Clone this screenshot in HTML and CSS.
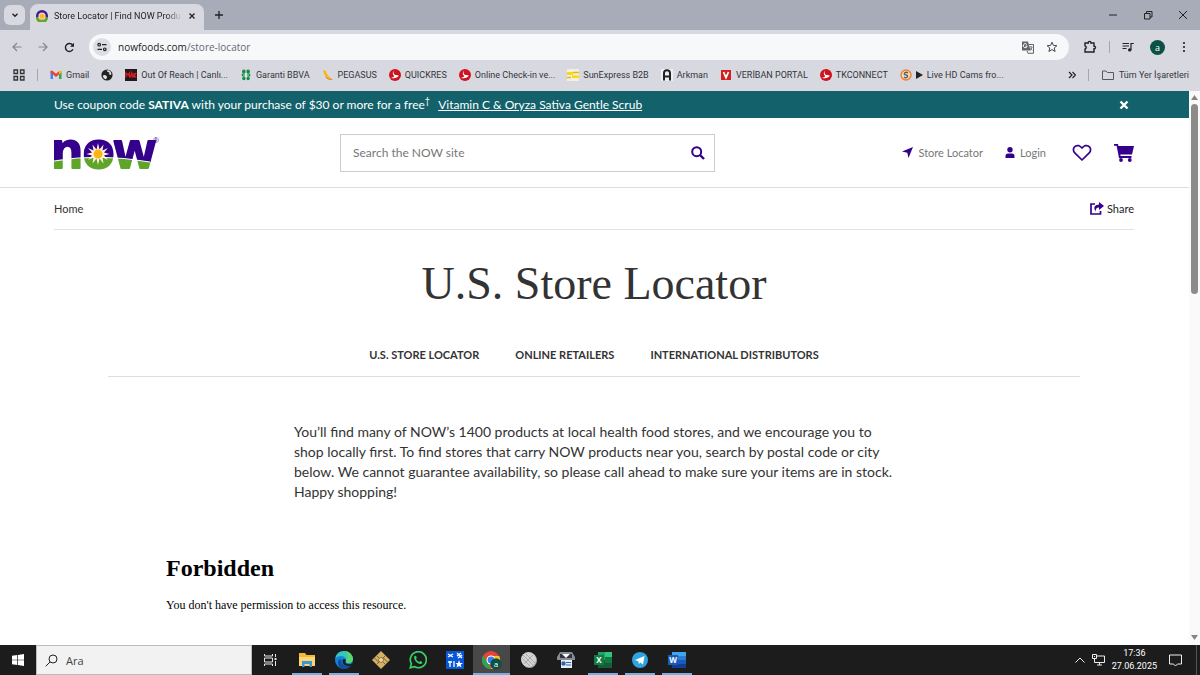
FILE: index.html
```html
<!DOCTYPE html>
<html lang="en">
<head>
    <meta charset="UTF-8">
    <meta name="viewport" content="width=device-width, initial-scale=1.0">
    <title>Store Locator | Find NOW Products</title>
    <link rel="stylesheet" href="styles.css">
</head>
<body>

<!-- shared icons -->
<svg class="defs" aria-hidden="true">
    <symbol id="bird" viewBox="0 0 12 12">
        <circle cx="6" cy="6" r="6" fill="#d0121f"/>
        <path d="M5 1.500C4.200 3 4.400 4.500 5.600 5.800L9.800 6.600C8.600 8.900 5.500 9.800 2 8.900C3.600 8.600 4.700 8 5.200 7C3.300 5.400 3.400 3 5 1.500z" fill="#fff"/>
    </symbol>
</svg>

<div class="tabstrip">
    <button class="tab-search" aria-label="Search tabs">
        <svg width="8" height="8" viewBox="0 0 8 8"><path d="M1.500 2.800L4 5.200L6.500 2.800" fill="none" stroke="#222" stroke-width="1.400"/></svg>
    </button>
    <div class="tab">
        <svg width="12" height="12" viewBox="0 0 12 12">
            <circle cx="6" cy="6" r="6" fill="#3a1a8c"/>
            <path d="M0 7.500Q6 5.500 12 7.500A6 6 0 0 1 0 7.500z" fill="#6aa52c"/>
            <circle cx="6" cy="6.200" r="3.600" fill="#f6d9c8"/>
            <circle cx="6" cy="6.200" r="2.500" fill="#fdb72a"/>
        </svg>
        <span class="tab-title">Store Locator | Find NOW Produ</span>
        <button aria-label="Close tab">
            <svg width="8" height="8" viewBox="0 0 8 8"><path d="M1.500 1.500L6.500 6.500M6.500 1.500L1.500 6.500" stroke="#222" stroke-width="1.300"/></svg>
        </button>
    </div>
    <button class="new-tab" aria-label="New tab">
        <svg width="10" height="10" viewBox="0 0 10 10"><path d="M5 1V9M1 5H9" stroke="#222" stroke-width="1.300"/></svg>
    </button>
    <div class="window-buttons">
        <button aria-label="Minimize"><svg width="10" height="10" viewBox="0 0 10 10"><path d="M1 5H9" stroke="#222"/></svg></button>
        <button aria-label="Restore"><svg width="10" height="10" viewBox="0 0 10 10"><path d="M1.500 3.500H7V9H1.500zM3.500 3.500V1.500H9V7H7" fill="none" stroke="#222"/></svg></button>
        <button aria-label="Close"><svg width="10" height="10" viewBox="0 0 10 10"><path d="M1 1L9 9M9 1L1 9" stroke="#222"/></svg></button>
    </div>
</div>

<div class="toolbar">
    <button aria-label="Back"><svg width="10" height="10" viewBox="0 0 10 10"><path d="M9.500 5H1M5 1L1 5L5 9" fill="none" stroke="#85878d" stroke-width="1.200"/></svg></button>
    <button aria-label="Forward"><svg width="10" height="10" viewBox="0 0 10 10"><path d="M.5 5H9M5 1L9 5L5 9" fill="none" stroke="#85878d" stroke-width="1.200"/></svg></button>
    <button aria-label="Reload"><svg width="11" height="11" viewBox="0 0 11 11"><path d="M9 7.300A4 4 0 1 1 8.600 3L9.300 4" fill="none" stroke="#222" stroke-width="1.400"/><path d="M10 .8V4.700H6.100z" fill="#222"/></svg></button>
    <div class="omnibox">
        <button class="site-info" aria-label="Site information">
            <svg width="10" height="10" viewBox="0 0 10 10"><g fill="none" stroke="#222" stroke-width="1.200"><circle cx="2.200" cy="2.700" r="1.300"/><path d="M5 2.700H9.500M.5 7.300H5"/><circle cx="7.800" cy="7.300" r="1.300"/></g></svg>
        </button>
        <div class="url">nowfoods.com<span>/store-locator</span></div>
        <button aria-label="Translate this page">
            <svg width="13" height="13" viewBox="0 0 13 13"><path d="M1 .5H7L9.500 9.500H1z" fill="#62656b"/><path d="M8 3.500H12.500V12.300H7L6 10" fill="none" stroke="#62656b"/><path d="M8.500 6H11.500M10 5V6M11 6.200Q10.500 8.500 8.800 9.500M9.300 7L11.300 9.300" fill="none" stroke="#62656b" stroke-width=".8"/><path d="M5.800 3.400A2 2 0 1 0 6.200 5.100H4.500" fill="none" stroke="#fff"/></svg>
        </button>
        <button aria-label="Bookmark this tab">
            <svg width="12" height="12" viewBox="0 0 12 12"><path d="M6 1.200L7.400 4.400L10.900 4.700L8.200 7L9.100 10.500L6 8.600L2.900 10.500L3.800 7L1.100 4.700L4.600 4.400z" fill="none" stroke="#44474c"/></svg>
        </button>
    </div>
    <button aria-label="Extensions"><svg width="14" height="14" viewBox="0 0 14 14"><path d="M2 3H5.300V2.200Q6.600 .6 7.900 2.200V3H11V6.300H11.700Q13.300 7.500 11.700 8.800H11V12H2V9.200Q4.500 7.500 2 5.800z" fill="none" stroke="#222" stroke-width="1.400"/></svg></button>
    <i class="divider"></i>
    <button aria-label="Media controls"><svg width="12" height="12" viewBox="0 0 12 12"><path d="M.5 2.500H7M.5 5H7M.5 7.500H4.500M9 9V2.500H11.800" fill="none" stroke="#222" stroke-width="1.200"/><circle cx="7.700" cy="8.900" r="1.700" fill="#222"/></svg></button>
    <button class="avatar" aria-label="Profile">a</button>
    <button aria-label="Menu"><svg width="6" height="12" viewBox="0 0 6 12"><g fill="#222"><circle cx="3" cy="2" r="1.100"/><circle cx="3" cy="6" r="1.100"/><circle cx="3" cy="10" r="1.100"/></g></svg></button>
</div>

<nav class="bookmarks">
    <a href="#" aria-label="Apps"><svg width="12" height="12" viewBox="0 0 12 12"><g fill="none" stroke="#333" stroke-width="1.300"><path d="M1 1H4.500V4.500H1zM7.500 1H11V4.500H7.500zM1 7.500H4.500V11H1zM7.500 7.500H11V11H7.500z"/></g></svg></a>
    <i class="divider"></i>
    <a href="#"><svg width="12" height="12" viewBox="0 0 12 12"><path d="M.5 2.500V10H3V5z" fill="#4285f4"/><path d="M11.500 2.500V10H9V5z" fill="#34a853"/><path d="M.5 2Q1.500 1 3 2.300L6 4.700L9 2.300V5.500L6 7.900L3 5.500L.5 3.500z" fill="#ea4335"/><path d="M9 2.300Q10.500 1 11.500 2V3.500L9 5.500z" fill="#fbbc04"/></svg>Gmail</a>
    <a href="#" aria-label="Bookmark"><svg width="12" height="12" viewBox="0 0 12 12"><circle cx="6" cy="6" r="5.600" fill="#222"/><path d="M1.800 6.500Q4 5.500 5.500 7T4.500 10.300Q2 9.500 1.800 6.500zM5.500 1.500Q6.500 3.500 8.500 3.500Q7.500 5.500 9.500 6L10.500 5Q10 2 7.500 1.300z" fill="#e6e7ea"/></svg></a>
    <a href="#"><svg width="12" height="12" viewBox="0 0 12 12"><path d="M0 0H12V12H0z" fill="#23191a"/><path d="M1 8.500V4L3 6L4.500 4V8.500M5.500 8.500L6.800 4L8 8.500M9 4V8.500M11.300 4L9 6.300L11.300 8.500" fill="none" stroke="#d81e23" stroke-width="1.300"/></svg>Out Of Reach | Canlı...</a>
    <a href="#"><svg width="12" height="12" viewBox="0 0 12 12"><g fill="#168a4a"><circle cx="4" cy="2.500" r="2"/><circle cx="8" cy="2.500" r="2"/><circle cx="3.400" cy="6" r="1.800"/><circle cx="8.600" cy="6" r="1.800"/><circle cx="4" cy="9.500" r="1.800"/><circle cx="8" cy="9.500" r="1.800"/></g><path d="M6 1V11M3 6H9" stroke="#e5efe8" stroke-width=".8"/></svg>Garanti BBVA</a>
    <a href="#"><svg width="12" height="12" viewBox="0 0 12 12"><path d="M1 1.500H3.500Q5 7 11 10.500Q3 11 1 1.500z" fill="#fbb414"/><path d="M3 7Q5 10 11 10.500Q5 11.800 3 7z" fill="#e8621e"/></svg>PEGASUS</a>
    <a href="#"><svg width="12" height="12"><use href="#bird"/></svg>QUICKRES</a>
    <a href="#"><svg width="12" height="12"><use href="#bird"/></svg>Online Check-in ve...</a>
    <a href="#"><svg width="12" height="12" viewBox="0 0 12 12"><path d="M0 0H12V12H0z" fill="#f4f0dc"/><path d="M0 3H6V6H0zM5 6.500H12V9H5z" fill="#fbd80f"/><path d="M6 3.500H12M0 8.500H4" stroke="#d9b92a" stroke-width="1.500"/></svg>SunExpress B2B</a>
    <a href="#"><svg width="12" height="12" viewBox="0 0 12 12"><path d="M0 0H12V12H0z" fill="#eeeff1"/><path d="M3 11.500V4Q3 1.200 6 1.200T9 4V11.500M3 7.500H9" fill="none" stroke="#222" stroke-width="2"/></svg>Arkman</a>
    <a href="#"><svg width="12" height="12" viewBox="0 0 12 12"><path d="M1 1H11V11H1z" fill="#d3201f"/><path d="M3.500 3L6 8.500L8.500 3" fill="none" stroke="#fff" stroke-width="1.800"/></svg>VERİBAN PORTAL</a>
    <a href="#"><svg width="12" height="12"><use href="#bird"/></svg>TKCONNECT</a>
    <a href="#"><svg width="12" height="12" viewBox="0 0 12 12"><circle cx="6" cy="6" r="5" fill="#f8d9b9" stroke="#ee8126" stroke-width="1.400"/><path d="M8 4Q6 2.500 4.700 4T6 6T7.200 8T4 8" fill="none" stroke="#4d6173" stroke-width="1.300"/></svg><svg class="play" width="7" height="8" viewBox="0 0 7 8"><path d="M0 0L7 4L0 8z" fill="#222"/></svg>Live HD Cams fro...</a>
    <button class="more" aria-label="More bookmarks"><svg width="8" height="8" viewBox="0 0 8 8"><path d="M1 1L4 4L1 7M4.500 1L7.500 4L4.500 7" fill="none" stroke="#222" stroke-width="1.200"/></svg></button>
    <i class="divider"></i>
    <a href="#"><svg width="14" height="12" viewBox="0 0 14 12"><path d="M1.500 2H5L6.300 3.500H12.500V10.500H1.500z" fill="none" stroke="#55585e"/></svg>Tüm Yer İşaretleri</a>
</nav>

<div class="viewport">
    <div class="site">
        <div class="promo">
            <p>Use coupon code <b>SATIVA</b> with your purchase of $30 or more for a free<sup>†</sup> <a href="#">Vitamin C &amp; Oryza Sativa Gentle Scrub</a></p>
            <button aria-label="Dismiss"><svg width="10" height="10" viewBox="0 0 10 10"><path d="M1.500 1.500L8.500 8.500M8.500 1.500L1.500 8.500" stroke="#fff" stroke-width="2.400"/></svg></button>
        </div>

        <header class="header">
            <a href="#" class="logo" aria-label="NOW">
                <svg width="112" height="34" viewBox="0 0 112 34">
                    <defs>
                        <pattern id="hill" width="112" height="34" patternUnits="userSpaceOnUse">
                            <path d="M0 0H112V34H0z" fill="#34008c"/>
                            <path d="M0 25Q45 17 96 26L112 29V34H0z" fill="#5fa52a"/>
                            <path d="M0 25Q45 17 96 26" fill="none" stroke="#fff"/>
                        </pattern>
                    </defs>
                    <circle cx="44" cy="18" r="14" fill="url(#hill)"/>
                    <text class="wordmark" x="-3" y="32" fill="url(#hill)" stroke="url(#hill)">now</text>
                    <path d="M44 7L45.500 13.500L49.500 8.500L48.500 14.500L54 12L50 16.500L55.500 18L50 19.500L54 24L48.500 21.500L49.500 27.500L45.500 22.500L44 29L42.500 22.500L38.500 27.500L39.500 21.500L34 24L38 19.500L32.500 18L38 16.500L34 12L39.500 14.500L38.500 8.500L42.500 13.500z" fill="#fff1dc"/>
                    <circle cx="44" cy="18" r="4.500" fill="#fdb515"/>
                    <text class="reg" x="99" y="7">®</text>
                </svg>
            </a>
            <form class="search">
                <input type="search" placeholder="Search the NOW site" aria-label="Search the NOW site">
                <button type="button" aria-label="Search"><svg width="14" height="14" viewBox="0 0 14 14"><circle cx="5.700" cy="5.700" r="4.500" fill="none" stroke="#34008c" stroke-width="2"/><path d="M9 9L13 13" stroke="#34008c" stroke-width="2.400"/></svg></button>
            </form>
            <nav class="account">
                <a href="#"><svg width="11" height="11" viewBox="0 0 11 11"><path d="M11 0L6.500 11L5.300 5.800L0 4.600z" fill="#34008c"/></svg>Store Locator</a>
                <a href="#"><svg width="10" height="11" viewBox="0 0 10 11"><circle cx="5" cy="2.800" r="2.700" fill="#34008c"/><path d="M.5 11V9Q.5 6.500 3 6.500H7Q9.500 6.500 9.500 9V11z" fill="#34008c"/></svg>Login</a>
                <a href="#" class="wishlist" aria-label="Wish list"><svg width="20" height="18" viewBox="0 0 20 18"><path d="M10 16L2.500 8.700Q.5 6 2.200 3.300Q4 1 7 1.700Q8.500 2.200 10 4Q11.500 2.200 13 1.700Q16 1 17.800 3.300Q19.500 6 17.500 8.700z" fill="none" stroke="#34008c" stroke-width="1.700" stroke-linejoin="round"/></svg></a>
                <a href="#" class="cart" aria-label="Cart"><svg width="20" height="18" viewBox="0 0 20 18"><path d="M0 0H4L4.400 2H20L18 10.500H6.300L6.600 12H17.500V14H5L2.600 1.700H0z" fill="#34008c"/><circle cx="7" cy="16" r="1.900" fill="#34008c"/><circle cx="15.800" cy="16" r="1.900" fill="#34008c"/></svg></a>
            </nav>
        </header>

        <main class="content">
            <div class="crumbs">
                <a href="#">Home</a>
                <a href="#" class="share"><svg width="14" height="13" viewBox="0 0 14 13"><path d="M5 2H1V12H10.500V9" fill="none" stroke="#34008c" stroke-width="1.700"/><path d="M9 0L14 4L9 8V5.500Q5.500 5.300 5.800 9.500Q1.500 3.500 9 2.500z" fill="#34008c"/></svg>Share</a>
            </div>
            <h1>U.S. Store Locator</h1>
            <nav class="sections">
                <a href="#">U.S. STORE LOCATOR</a>
                <a href="#">ONLINE RETAILERS</a>
                <a href="#">INTERNATIONAL DISTRIBUTORS</a>
            </nav>
            <p class="intro">You’ll find many of NOW’s 1400 products at local health food stores, and we encourage you to shop locally first. To find stores that carry NOW products near you, search by postal code or city below. We cannot guarantee availability, so please call ahead to make sure your items are in stock. Happy shopping!</p>
            <section class="error">
                <h2>Forbidden</h2>
                <p>You don't have permission to access this resource.</p>
            </section>
        </main>
    </div>
    <div class="scrollbar">
        <svg width="7" height="5" viewBox="0 0 7 5"><path d="M0 5L3.500 0L7 5z" fill="#858585"/></svg>
        <div class="thumb"></div>
        <svg width="7" height="5" viewBox="0 0 7 5"><path d="M0 0L3.500 5L7 0z" fill="#858585"/></svg>
    </div>
</div>

<footer class="taskbar">
    <button class="start" aria-label="Start"><svg width="12" height="12" viewBox="0 0 12 12"><path d="M0 1.700L5.300 1V5.700H0zM6 .9L12 0V5.700H6zM0 6.300H5.300V11L0 10.300zM6 6.300H12V12L6 11.100z" fill="#fff"/></svg></button>
    <label class="find">
        <svg width="13" height="13" viewBox="0 0 13 13"><circle cx="8" cy="5" r="4" fill="none" stroke="#222"/><path d="M5 8L.7 12.300" stroke="#222"/></svg>
        <input type="text" placeholder="Ara" aria-label="Ara">
    </label>
    <button class="task-view" aria-label="Task view"><svg width="13" height="12" viewBox="0 0 13 12"><path d="M.5 0V2H8.500V0M.5 12V10H8.500V12M.5 4H8.500V8H.5zM11.500 0V3M11.500 7V12" fill="none" stroke="#e8e8e8"/><path d="M10.500 4H12.500V6H10.500z" fill="#e8e8e8"/></svg></button>
    <button class="open" aria-label="File Explorer"><svg width="16" height="14" viewBox="0 0 16 14"><path d="M0 0H6L7.500 2H16V13H0z" fill="#f3b73c"/><path d="M0 4H16V13H0z" fill="#fcd66e"/><path d="M3 14V8H13V14H10.500V11H5.500V14z" fill="#3b96dc"/></svg></button>
    <button class="open" aria-label="Edge"><svg width="18" height="18" viewBox="0 0 18 18"><circle cx="9" cy="9" r="9" fill="#1683d8"/><path d="M.3 7Q2 0 9 0Q16 .5 18 7Q18 12 13 12Q10 12 11 9.500Q11 5.500 6.500 5Q2.500 5 .3 7z" fill="#36c6c0"/><path d="M10 .1Q17 1 18 8Q17.500 12 13 12Q11 12 11 10Q15 6 10 .1z" fill="#5bd66b"/><path d="M6.500 8Q5.500 14 12.500 15Q15 15 16.500 14Q13 18.500 8 18Q2 16 3 10Q4 8 6.500 8z" fill="#0c4f9f"/><path d="M11 9Q9 12 13 13.300Q16 13.500 17.500 12Q17 15 14 15.200Q7 14.500 7.500 9.500Q8.500 7 11 9z" fill="#1c1c1c"/></svg></button>
    <button aria-label="Smart card"><svg width="18" height="18" viewBox="0 0 18 18"><path d="M9 0L18 9L9 18L0 9z" fill="#d4b069"/><path d="M4.500 4.500L13.500 13.500M13.500 4.500L4.500 13.500M2.500 7L7 11.500M11 6.500L15.500 11" stroke="#7b6230" fill="none"/><path d="M9 6L12 9L9 12L6 9z" fill="#ebcf8c" stroke="#7b6230" stroke-width=".7"/></svg></button>
    <button aria-label="WhatsApp"><svg width="18" height="18" viewBox="0 0 18 18"><path d="M1.300 16.700L2.400 12.700A8 8 0 1 1 5.300 15.600z" fill="none" stroke="#35cf63" stroke-width="1.700"/><path d="M5.500 5Q7 3.800 7.800 6.800L7 8Q8 10 10.200 11L11.300 9.900Q14 10.800 13 12.200Q11 14.300 7.500 11.300Q4 7.500 5.500 5z" fill="#35cf63"/></svg></button>
    <button aria-label="Tools"><svg width="18" height="18" viewBox="0 0 18 18"><path d="M0 0H18V18H0z" fill="#0757dc"/><path d="M2 3L7 6M2 6L7 3M4 10V16M2 11H6M8 10V16M11 2L16 7M11 5L15 2M12 7L16 4" stroke="#fff" stroke-width="1.300"/><path d="M13 9L14 12H17L14.700 13.700L15.500 16.500L13 15L10.500 16.500L11.300 13.700L9.500 12H12z" fill="#fff"/></svg></button>
    <button class="open active" aria-label="Chrome"><svg width="20" height="19" viewBox="0 0 20 19"><circle cx="9" cy="9" r="9" fill="#e94335"/><path d="M1.200 4.500L5.500 11L9 18A9 9 0 0 1 1.200 4.500z" fill="#2da44e"/><path d="M9 5H17.200A9 9 0 0 1 9 18L12.500 11z" fill="#fcc31e"/><circle cx="9" cy="9" r="4.500" fill="#fff"/><circle cx="9" cy="9" r="3.400" fill="#3c7df0"/><circle cx="14" cy="13" r="5.700" fill="#0b5145"/><text class="badge" x="14" y="16">a</text></svg></button>
    <button aria-label="Disc"><svg width="18" height="18" viewBox="0 0 18 18"><circle cx="9.500" cy="9.500" r="7.500" fill="#aaa"/><circle cx="8.500" cy="8.500" r="7.500" fill="#d3d3d3"/><path d="M3 4L13 14M5.500 2.500L15 12M2 7L10 15M13 4L4 13" stroke="#a1a1a1" stroke-width=".8"/></svg></button>
    <button aria-label="Receipt printer"><svg width="18" height="16" viewBox="0 0 18 16"><path d="M3 0H15L18 5V8H0V5z" fill="#858b97"/><path d="M3 2H15V6H3z" fill="#30343d"/><path d="M5 2H13L9 6z" fill="#fff"/><path d="M4 8H15V16H4z" fill="#e9edf3"/><path d="M5 10H8V13H5zM9 10.500H14M9 13H14" fill="#2f63a7" stroke="#2f63a7"/></svg></button>
    <button class="open" aria-label="Excel"><svg width="18" height="16" viewBox="0 0 18 16"><path d="M4 0H18V16H4z" fill="#21a366"/><path d="M11 0H18V5H11z" fill="#33c481"/><path d="M4 8H18V16H4z" fill="#185c37"/><path d="M11 5H18V11H11z" fill="#107c41"/><path d="M0 3H10V13H0z" fill="#107c41"/><text class="letter" x="5" y="11">X</text></svg></button>
    <button class="open" aria-label="Telegram"><svg width="16" height="16" viewBox="0 0 16 16"><circle cx="8" cy="8" r="8" fill="#2fa3dc"/><path d="M3 8L12.500 4L11 12.500L8.300 10.500L6.800 12L6.300 9.300z" fill="#fff"/></svg></button>
    <button class="open" aria-label="Word"><svg width="18" height="16" viewBox="0 0 18 16"><path d="M4 0H18V16H4z" fill="#2b7cd3"/><path d="M4 0H18V4H4z" fill="#41a5ee"/><path d="M4 8H18V12H4z" fill="#185abd"/><path d="M4 12H18V16H4z" fill="#103f91"/><path d="M0 3H10V13H0z" fill="#185abd"/><text class="letter" x="5" y="11">W</text></svg></button>
    <div class="tray">
        <button aria-label="Hidden icons"><svg width="10" height="6" viewBox="0 0 10 6"><path d="M.5 5.500L5 1L9.500 5.500" fill="none" stroke="#eee"/></svg></button>
        <button aria-label="Network"><svg width="13" height="12" viewBox="0 0 13 12"><path d="M5 2H12.500V8.500H2.500V5M5 11H10M7.500 8.500V11M.5 .5H4.500V4.500H.5zM2 2.500H3" fill="none" stroke="#eee"/></svg></button>
        <time>17:36<br>27.06.2025</time>
        <button aria-label="Notifications"><svg width="13" height="13" viewBox="0 0 13 13"><path d="M.5 1H12.500V10H8.500L6.500 12L4.500 10H.5z" fill="none" stroke="#eee"/></svg></button>
    </div>
</footer>

</body>
</html>
```

FILE: styles.css
```css
* {
    box-sizing: border-box;
}

body {
    margin: 0;
    height: 100vh;
    display: flex;
    flex-direction: column;
    overflow: hidden;
    background: #d8d9e0;
    color: #333;
    font-family: Lato, "Noto Sans", sans-serif;
}

a {
    color: inherit;
    text-decoration: none;
}

button {
    display: flex;
    align-items: center;
    justify-content: center;
    padding: 0;
    border: 0;
    background: none;
    cursor: pointer;
}

svg {
    flex: none;
    display: block;
}

.defs {
    position: absolute;
    width: 0;
    height: 0;
}

/* browser window */
.tabstrip,
.toolbar,
.bookmarks,
.taskbar {
    flex: none;
    display: flex;
    align-items: center;
    font-family: Roboto, "Noto Sans", sans-serif;
    white-space: nowrap;
}

.tabstrip {
    height: 30px;
    padding: 0 12px 0 4px;
    background: #a8abb8;
}

.tab-search {
    width: 21px;
    height: 20px;
    border-radius: 6px;
    background: #d8d9e0;
}

.tab {
    display: flex;
    align-items: center;
    align-self: flex-end;
    width: 174px;
    height: 26px;
    margin-left: 5px;
    padding: 0 8px 3px 6px;
    gap: 6px;
    border-radius: 8px 8px 0 0;
    background: #d8d9e0;
}

.tab-title {
    flex: 1;
    overflow: hidden;
    font-size: 9px;
    color: #222;
    -webkit-mask-image: linear-gradient(90deg, #000 88%, transparent);
    mask-image: linear-gradient(90deg, #000 88%, transparent);
}

.new-tab {
    margin-left: 10px;
}

.window-buttons {
    display: flex;
    gap: 25px;
    margin-left: auto;
}

.toolbar {
    height: 34px;
    padding: 0 13px 0 12px;
    gap: 16px;
}

.omnibox {
    flex: 1;
    display: flex;
    align-items: center;
    height: 26px;
    padding: 0 11px 0 4px;
    gap: 12px;
    border-radius: 13px;
    background: #f6f8fa;
}

.toolbar .omnibox {
    margin-left: -2px;
    margin-right: -2px;
}

.site-info {
    width: 18px;
    height: 18px;
    border-radius: 50%;
    background: #dcdee4;
}

.url {
    flex: 1;
    margin-left: -5px;
    font: 10px "Open Sans", sans-serif;
    color: #222;
}

.url span {
    color: #666a70;
}

.divider {
    width: 1px;
    height: 12px;
    background: #a5a7af;
}

.toolbar .divider {
    margin: 0 -4px;
}

.avatar {
    width: 15px;
    height: 15px;
    border-radius: 50%;
    background: #0b5145;
    color: #fff;
    font: 9px "Open Sans", sans-serif;
}

.bookmarks {
    height: 27px;
    padding: 0 11px 5px 13px;
    gap: 12px;
    font-size: 9px;
    color: #33353a;
}

.bookmarks a {
    display: flex;
    align-items: center;
    gap: 4px;
}

.more {
    margin-left: auto;
}

/* page area */
.viewport {
    flex: 1;
    min-height: 0;
    display: flex;
    background: #fff;
}

.site {
    flex: 1;
    min-width: 0;
    overflow: hidden;
}

.promo {
    display: flex;
    align-items: center;
    justify-content: space-between;
    height: 27px;
    padding: 0 60px 0 54px;
    background: #13626b;
    color: #fff;
    font-size: 12px;
}

.promo p {
    margin: 0;
    line-height: 20px;
}

.promo sup {
    font-size: 9px;
    line-height: 0;
}

.promo a {
    margin-left: 5px;
    text-decoration: underline;
}

.header {
    display: grid;
    grid-template-columns: 286px minmax(0, 375px) 1fr;
    align-items: center;
    height: 70px;
    padding: 0 55px 0 54px;
    border-bottom: 1px solid #ddd;
}

.wordmark {
    font: bold 52px "Liberation Sans", sans-serif;
    stroke-width: 2px;
    stroke-linejoin: round;
}

.reg {
    font: 8px "Liberation Sans", sans-serif;
    fill: #34008c;
}

.search {
    display: flex;
    align-items: center;
    height: 38px;
    padding: 0 9px 0 12px;
    border: 1px solid #ccc;
}

.search input {
    flex: 1;
    min-width: 0;
    padding: 0;
    border: 0;
    outline: 0;
    font: 12px Lato, sans-serif;
}

.search input::placeholder {
    color: #777;
    opacity: 1;
}

.account {
    display: flex;
    align-items: center;
    justify-content: flex-end;
    gap: 22px;
    font-size: 11px;
    color: #777;
}

.account a {
    display: flex;
    align-items: center;
    gap: 5px;
}

.wishlist {
    margin-left: 4px;
}

.content {
    padding: 0 55px 0 54px;
}

.crumbs {
    display: flex;
    align-items: center;
    justify-content: space-between;
    height: 42px;
    border-bottom: 1px solid #e3e3e3;
    font-size: 11px;
}

.share {
    display: flex;
    align-items: center;
    gap: 3px;
    color: #222;
}

h1 {
    margin: 24px 0 0;
    font: 46px/60px "Liberation Serif", serif;
    text-align: center;
}

.sections {
    display: flex;
    justify-content: center;
    gap: 36px;
    margin: 0 54px;
    padding: 31px 0 11px;
    border-bottom: 1px solid #ddd;
    font-size: 11px;
    font-weight: bold;
    line-height: 20px;
}

.intro {
    max-width: 600px;
    margin: 45px auto 0;
    font-size: 14px;
    line-height: 20px;
}

.error {
    margin: 52px 112px 0;
    font-family: "Liberation Serif", serif;
    color: #000;
}

.error h2 {
    margin: 0;
    font-size: 24px;
    line-height: 28px;
}

.error p {
    margin: 15px 0 0;
    font-size: 12px;
    line-height: 16px;
}

.scrollbar {
    display: flex;
    flex-direction: column;
    align-items: center;
    justify-content: space-between;
    width: 11px;
    padding: 4px 0 5px;
    background: #fafafa;
}

.thumb {
    width: 7px;
    height: 190px;
    margin: 4px 0 auto;
    border-radius: 4px;
    background: #8b8b8b;
}

/* windows taskbar */
.taskbar {
    height: 30px;
    background: #1c1c1c;
}

.taskbar > button {
    width: 37px;
    height: 30px;
}

.taskbar > .start,
.taskbar > .task-view {
    width: 36px;
}

.find {
    display: flex;
    align-items: center;
    gap: 8px;
    width: 216px;
    height: 30px;
    padding: 0 8px;
    border: 1px solid #bbb;
    background: #f2f2f2;
}

.find input {
    width: 100%;
    padding: 0;
    border: 0;
    outline: 0;
    background: none;
    font: 11px "Open Sans", sans-serif;
}

.find input::placeholder {
    color: #444;
    opacity: 1;
}

.taskbar .open {
    background: linear-gradient(#76b0e0, #76b0e0) center bottom / 30px 2px no-repeat;
}

.taskbar .active {
    background: linear-gradient(#76b0e0, #76b0e0) center bottom / 37px 2px no-repeat, #484848;
}

.badge {
    font: 8px "Open Sans", sans-serif;
    fill: #fff;
    text-anchor: middle;
}

.letter {
    font: bold 8px "Open Sans", sans-serif;
    fill: #fff;
    text-anchor: middle;
}

.tray {
    display: flex;
    align-items: center;
    gap: 7px;
    height: 30px;
    margin: 0 3px 0 auto;
    padding-right: 14px;
    border-right: 1px solid #555;
    color: #fff;
    font-size: 9px;
    line-height: 13px;
    text-align: center;
}

.tray time {
    margin-right: 5px;
}
```
